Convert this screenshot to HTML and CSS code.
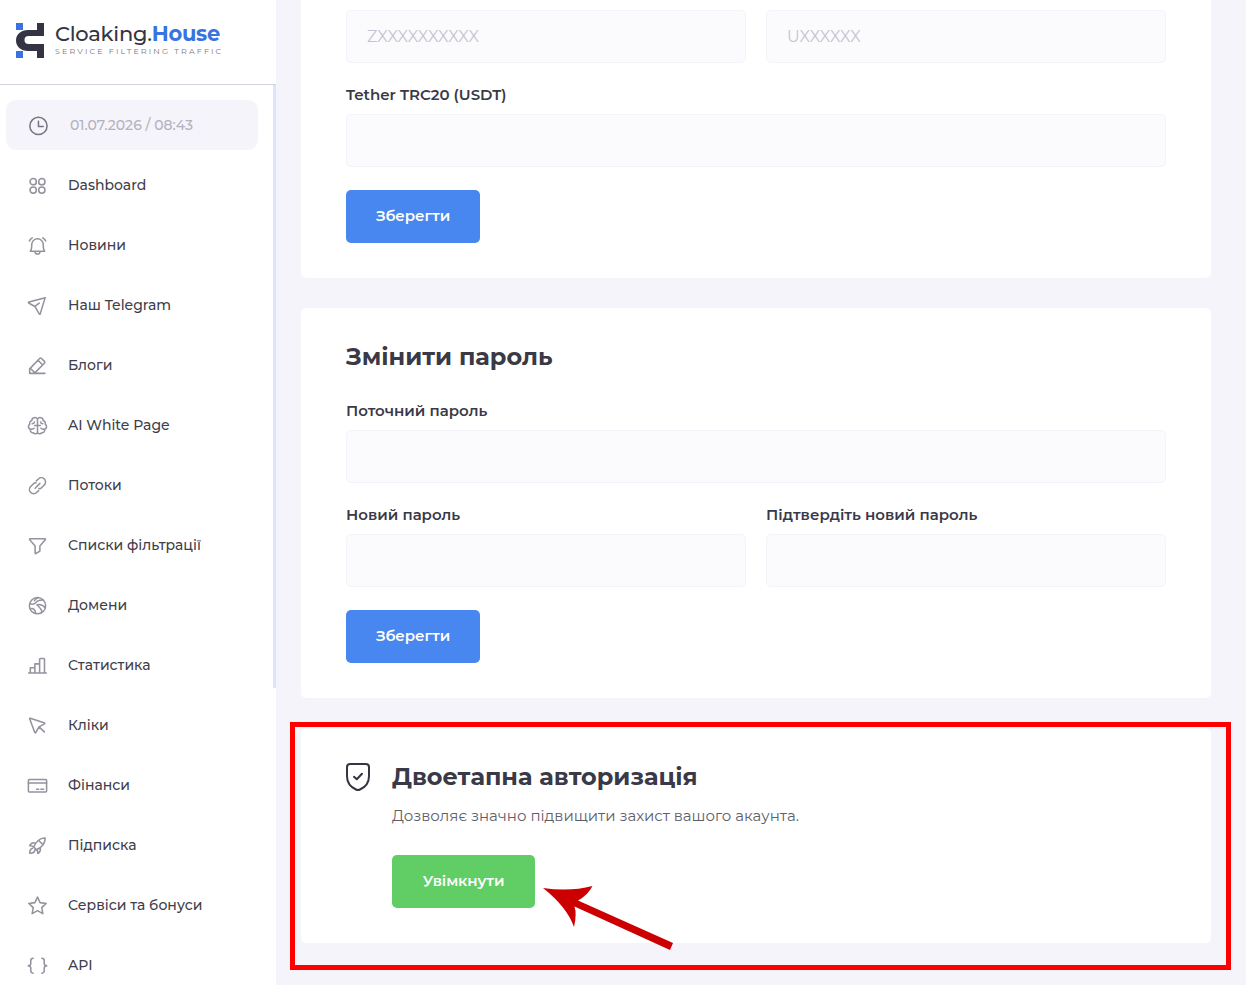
FILE: index.html
```html
<!DOCTYPE html>
<html lang="uk">

<head>
  <meta charset="UTF-8" />
  <meta name="viewport" content="width=device-width, initial-scale=1.0" />
  <title>Cloaking.House</title>
  <link rel="stylesheet" href="styles.css">
</head>

<body>
  <aside class="sidebar">
    <a class="logo" href="#">
      <svg class="logo-mark" width="28" height="35" viewBox="0 0 28 35">
        <path fill="#3873e0" d="M0 0h7v7H0zM0 28h7v7H0z" />
        <path fill="#353444" d="M21 0h7v13H12.500a4 4 0 0 0 0 8H28v14h-7v-7H12C5 28 0 23.500 0 17.500S5 7 12 7h9z" />
      </svg>
      <span class="logo-text">
        <span class="logo-name">Cloaking.<b>House</b></span>
        <span class="logo-sub">SERVICE FILTERING TRAFFIC</span>
      </span>
    </a>

    <nav class="menu">
      <div class="menu-item time">
        <svg viewBox="0 0 24 24"><circle cx="13" cy="12.500" r="9" /><path d="M13 7.500v5.500h5" /></svg>
        <span>01.07.2026 / 08:43</span>
      </div>
      <a class="menu-item" href="#">
        <svg viewBox="0 0 24 24"><circle cx="7.500" cy="8" r="3.300" /><circle cx="16.500" cy="8" r="3.300" /><circle cx="7.500" cy="16.800" r="3.300" /><circle cx="16.500" cy="16.800" r="3.300" /></svg>
        <span>Dashboard</span>
      </a>
      <a class="menu-item" href="#">
        <svg viewBox="0 0 24 24"><path d="M4.500 18c1.500-1.500 1.500-3 1.500-7a6 6 0 0 1 12 0c0 4 0 5.500 1.500 7zM9.300 18.500c.3 3.300 5.100 3.300 5.400 0M3.500 7.200q.8-2 3-3.200M20.500 7.200q-.8-2-3-3.200" /></svg>
        <span>Новини</span>
      </a>
      <a class="menu-item" href="#">
        <svg viewBox="0 0 24 24"><path d="M20 3.800 3.200 8.300q-1.500.5 0 1.300l6.100 3.400 4.300 7.500q.8 1.400 1.300 0zM9.300 13l4.500-3.500" /></svg>
        <span>Наш Telegram</span>
      </a>
      <a class="menu-item" href="#">
        <svg viewBox="0 0 24 24"><path d="M3.800 20.200v-4.700L14.200 4.700q1-1 2 0l3 3q1 1 0 2L8.700 20.200zM4.500 14.800l5 5M12.500 6.500l5 5M3.800 20.200h16" /></svg>
        <span>Блоги</span>
      </a>
      <a class="menu-item" href="#">
        <svg viewBox="0 0 24 24"><path d="M12 5.500c-1.500-3-6-2-6 1.500-2 .4-2.500 2-2 3.500-2.200 1.500-1.900 4.600.6 5.400-.5 2.500 1.200 3.800 2.900 3.600 1.500 2 4.500 1 4.500-.5 0 1.500 3 2.500 4.500.5 1.700.2 3.400-1.100 2.900-3.600 2.500-.8 2.800-3.900.6-5.400.5-1.500 0-3.100-2-3.500 0-3.500-4.500-4.500-6-1.500zM12 5.500V19M9 12h6M6.500 10.200q2 .2 2.300-1.900M17.500 10.200q-2 .2-2.300-1.900M4.800 15.800q3 .2 3.700-1M19.200 15.800q-3 .2-3.700-1" /></svg>
        <span>AI White Page</span>
      </a>
      <a class="menu-item" href="#">
        <svg viewBox="0 0 24 24"><path d="M10.800 7.200l2.100-2a4.300 4.300 0 0 1 6.200 6.200l-3 3q-1.300 1.100-2.600.8M13.200 17.300l-2.100 2a4.300 4.300 0 0 1-6.200-6.200l3-3q1.300-1.100 2.600-.8M9.500 14.800l5-5" /></svg>
        <span>Потоки</span>
      </a>
      <a class="menu-item" href="#">
        <svg viewBox="0 0 24 24"><path d="M4.300 5h15.400q1 0 .4 1l-5.600 6.500v5.300l-4 2.500q-1 .5-1-.5v-7.300L3.900 6q-.6-1 .4-1z" /></svg>
        <span>Списки фільтрації</span>
      </a>
      <a class="menu-item" href="#">
        <svg viewBox="0 0 24 24"><circle cx="12" cy="12.200" r="8.500" /><path d="M4 10.200c3.500 1 5.500.3 6.700-1.700C12 6.500 14.500 6 18 6.200M12.500 3.800q-2.500.7-3.700 3.200M20 14.500c-2-2.500-4.500-4.500-8.500-3.200 2 1.500 2.500 3 4 4.500q1.300 1.300.7 3.500M4.500 15.500c3-1 5.500 1 5.500 4.800" /></svg>
        <span>Домени</span>
      </a>
      <a class="menu-item" href="#">
        <svg viewBox="0 0 24 24"><path d="M2.800 19.800h18.400M4.500 19.800v-5.500h4.800v5.500M9.300 19.800v-9.500h4.900v9.500M14.200 19.800V5.500q0-.8.800-.8h3.500q.8 0 .8.800v14.300" /></svg>
        <span>Статистика</span>
      </a>
      <a class="menu-item" href="#">
        <svg viewBox="0 0 24 24"><path d="M4.500 4.500l14.300 4.700q1.500.6.100 1.400L13.600 13.400l-3.300 5.900q-.8 1-1.300-.4L3.900 5.200q-.3-1 .6-.7zM13.600 13.400l5.500 5.300" /></svg>
        <span>Кліки</span>
      </a>
      <a class="menu-item" href="#">
        <svg viewBox="0 0 24 24"><rect x="2.500" y="5.800" width="19" height="13" rx="1" /><path d="M2.500 9.300h19M11 16h2.300M15.500 16h2.800" /></svg>
        <span>Фінанси</span>
      </a>
      <a class="menu-item" href="#">
        <svg viewBox="0 0 24 24"><path d="M8.200 13.500C10 8.500 14.500 3.800 20 4.200c.3 5.500-4 10.300-9.300 12.300zM10 9.500q-4-1.500-6.200 2.700 2.700-.3 4.400 1.300M14.800 14q1.200 4.300-2.500 6.300.5-2.700-1.600-3.800M7 14.800q-3.400 1-3 5.200 5 .2 5.200-3.200M14 7.500l3 3" /></svg>
        <span>Підписка</span>
      </a>
      <a class="menu-item" href="#">
        <svg viewBox="0 0 24 24"><path d="M12 3.200l2.700 5.800 6.400.8-4.700 4.400 1.200 6.300-5.600-3.100-5.600 3.100 1.200-6.300-4.700-4.400 6.400-.8z" /></svg>
        <span>Сервіси та бонуси</span>
      </a>
      <a class="menu-item" href="#">
        <svg viewBox="0 0 24 24"><path d="M7.500 4.500Q5 4.500 5 7v2.800q0 2.200-2.700 2.400Q5 12.400 5 14.600v3q0 2.400 2.500 2.400M16.500 4.500Q19 4.500 19 7v2.800q0 2.200 2.700 2.400-2.700.2-2.700 2.400v3q0 2.400-2.500 2.400" /></svg>
        <span>API</span>
      </a>
    </nav>
    <div class="scroll-thumb"></div>
  </aside>

  <main class="content">
    <section class="card card-wallets">
      <div class="row">
        <input class="input" type="text" placeholder="ZXXXXXXXXXX" />
        <input class="input" type="text" placeholder="UXXXXXX" />
      </div>
      <div class="row">
        <label class="field">
          <span>Tether TRC20 (USDT)</span>
          <input class="input" type="text" />
        </label>
      </div>
      <button class="btn" type="button">Зберегти</button>
    </section>

    <section class="card">
      <h2>Змінити пароль</h2>
      <div class="row">
        <label class="field">
          <span>Поточний пароль</span>
          <input class="input" type="password" />
        </label>
      </div>
      <div class="row">
        <label class="field">
          <span>Новий пароль</span>
          <input class="input" type="password" />
        </label>
        <label class="field">
          <span>Підтвердіть новий пароль</span>
          <input class="input" type="password" />
        </label>
      </div>
      <button class="btn" type="button">Зберегти</button>
    </section>

    <section class="card card-auth">
      <svg class="shield" width="26" height="30" viewBox="0 0 26 30">
        <path d="M4.200 2h15.600Q23 2 23 5.200V14c0 7-4.500 11.500-9 13.500q-2 1-4 0C5.500 25.500 1 21 1 14V5.200Q1 2 4.200 2z" />
        <path d="M8 14.800l2.800 2.500 5.200-5.500" />
      </svg>
      <div class="auth-body">
        <h2>Двоетапна авторизація</h2>
        <p>Дозволяє значно підвищити захист вашого акаунта.</p>
        <button class="btn btn-green" type="button">Увімкнути</button>
      </div>
      <div class="highlight"></div>
      <svg class="arrow" width="132" height="66" viewBox="0 0 132 66">
        <path d="M1 2Q28 6 50.500 0 46 9 36 14.500L131 57 128 64 32.500 20.500Q35 28 32 41 25 21 1 2z" />
      </svg>
    </section>
  </main>
</body>

</html>
```
FILE: styles.css
```css
* {
  box-sizing: border-box;
}

body {
  margin: 0;
  display: flex;
  height: 985px;
  overflow: hidden;
  font-family: Montserrat, Inter, sans-serif;
  background-color: #f5f4fb;
  color: #3a3947;
}

/* sidebar */
.sidebar {
  position: relative;
  width: 276px;
  height: 985px;
  overflow: hidden;
  flex-shrink: 0;
  background-color: #fff;
}

.logo {
  display: flex;
  gap: 11px;
  height: 85px;
  padding: 23px 0 0 16px;
  border-bottom: 1px solid #d3d2de;
  color: #353444;
  text-decoration: none;
}

.logo-text {
  display: flex;
  flex-direction: column;
  white-space: nowrap;
}

.logo-name {
  font-size: 21px;
  font-weight: 500;
  line-height: 21px;
  letter-spacing: -0.25px;
}

.logo-name b {
  font-weight: 700;
  color: #3873e0;
}

.logo-sub {
  font-size: 8px;
  line-height: 14px;
  letter-spacing: 2.1px;
  color: #777684;
}

.menu {
  display: flex;
  flex-direction: column;
  gap: 10px;
  padding: 15px 18px 0 6px;
}

.menu-item {
  display: flex;
  align-items: center;
  height: 50px;
  flex-shrink: 0;
  padding-left: 20px;
  gap: 19px;
  font-size: 14px;
  font-weight: 500;
  color: #3f3e4c;
  text-decoration: none;
  white-space: nowrap;
}

.menu-item svg {
  width: 23px;
  height: 23px;
  fill: none;
  stroke: #93929d;
  stroke-width: 1.6;
  stroke-linecap: round;
  stroke-linejoin: round;
}

.menu-item.time {
  gap: 21px;
  border-radius: 10px;
  background-color: #f5f4fb;
  color: #b4b2c0;
}

.menu-item.time svg {
  stroke: #777684;
}

.scroll-thumb {
  position: absolute;
  top: 85px;
  right: 0;
  width: 3px;
  height: 603px;
  background-color: #d9e6fd;
}

/* content */
.content {
  flex: 1;
  display: flex;
  flex-direction: column;
  gap: 30px;
  padding: 0 35px 0 25px;
}

.card {
  padding: 34px 45px 35px;
  border-radius: 5px;
  background-color: #fff;
}

.card-wallets {
  padding-top: 10px;
  border-radius: 0 0 5px 5px;
}

h2 {
  margin: 0;
  font-size: 24px;
  line-height: 30px;
  font-weight: 700;
  white-space: nowrap;
}

.card > h2 {
  margin-bottom: 27px;
}

.row {
  display: flex;
  gap: 20px;
  margin-bottom: 20px;
}

.field {
  flex: 1;
  font-size: 15px;
  font-weight: 600;
  line-height: 24px;
}

.field span {
  display: block;
  margin-bottom: 7px;
}

.input {
  display: block;
  width: 100%;
  height: 53px;
  padding: 0 20px;
  border: 1px solid #f4f3f9;
  border-radius: 5px;
  background-color: #fbfbfd;
  font-family: inherit;
  font-size: 16px;
}

.input::placeholder {
  color: #c5c3d0;
}

.btn {
  display: block;
  width: 134px;
  height: 53px;
  margin-top: 23px;
  padding: 0 0 2px;
  border: none;
  border-radius: 5px;
  background-color: #4886f0;
  color: #fff;
  font-family: inherit;
  font-size: 15px;
  font-weight: 600;
  letter-spacing: -0.1px;
}

.btn-green {
  width: 143px;
  margin-top: 27px;
  background-color: #61ce65;
}

.card-auth {
  position: relative;
  display: flex;
  gap: 20px;
}

.shield {
  fill: none;
  stroke: #353444;
  stroke-width: 2;
  stroke-linecap: round;
  stroke-linejoin: round;
}

.auth-body p {
  margin: 12px 0 0;
  font-size: 15px;
  line-height: 24px;
  color: #5f5e6b;
}

/* marker around the two-step block */
.highlight {
  position: absolute;
  top: -6px;
  left: -11px;
  width: 941px;
  height: 248px;
  border: 5px solid #f00;
}

.arrow {
  position: absolute;
  top: 158px;
  left: 241px;
  fill: #c00;
}
```
